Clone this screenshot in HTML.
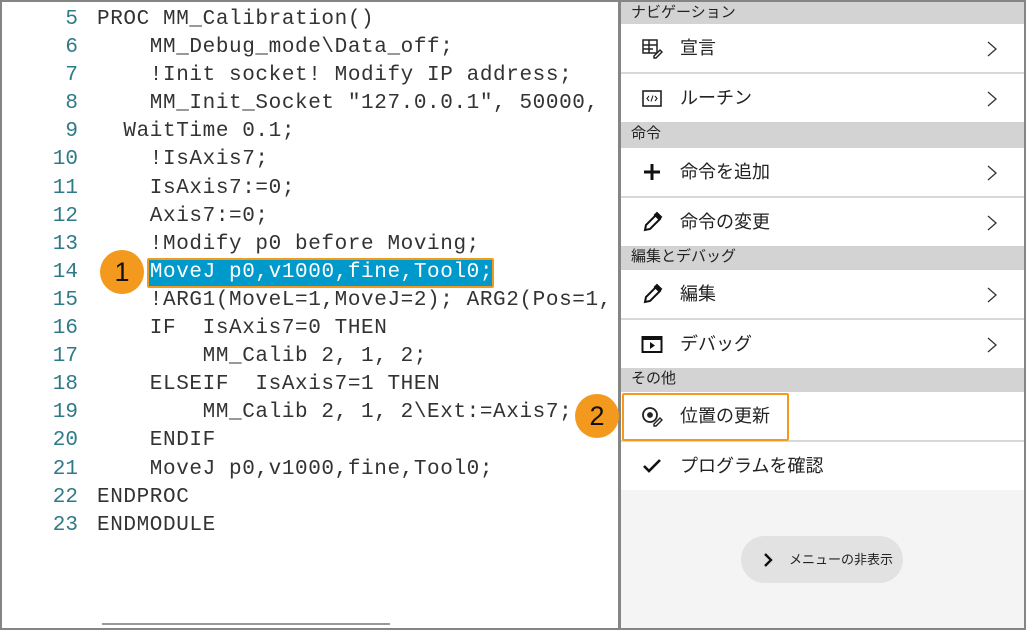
<html><head><style>
body{margin:0;width:1026px;height:630px;overflow:hidden;background:#fff;font-family:"Liberation Sans","Noto Sans CJK JP",sans-serif;position:relative}
.frame{position:absolute;left:0;top:0;width:1022px;height:626px;border:2px solid #858585}
.div{position:absolute;left:618px;top:0;width:3px;height:630px;background:#858585}
.rp{position:absolute;left:621px;top:2px;width:403px;height:626px;background:#f4f4f4}
.h{background:#d3d3d3;height:24px;line-height:22px;font-size:15px;color:#222;padding-left:10px;box-sizing:border-box}
.it{background:#fff;height:48px;position:relative;font-size:18px;color:#222;line-height:48px}
.it .t{position:absolute;left:59px}
.it .ic{position:absolute;left:20px;top:13px;width:22px;height:22px}
.it .ar{position:absolute;right:26px;top:16px}
.sep{height:2px;background:#d8d8d8}
.c{position:absolute;width:44px;height:44px;border-radius:50%;background:#f39a1e;color:#111;font-size:27px;text-align:center;line-height:44px}
.mono{font-family:"Liberation Mono",monospace;font-size:21px;letter-spacing:0.6px;line-height:28.1px;white-space:pre}
</style></head><body>
<div class="frame"></div>
<div style="position:absolute;left:147px;top:258px;width:343px;height:26px;background:#0099cc;border:2px solid #f39a1e;border-radius:2px"></div>
<div class="mono" style="position:absolute;left:0;top:6px;width:78px;text-align:right;color:#2f7a88;letter-spacing:0">5
6
7
8
9
10
11
12
13
14
15
16
17
18
19
20
21
22
23</div>
<div class="mono" style="position:absolute;left:97px;top:6px;width:520px;overflow:hidden;color:#333">PROC MM_Calibration()
    MM_Debug_mode\Data_off;
    !Init socket! Modify IP address;
    MM_Init_Socket "127.0.0.1", 50000,
  WaitTime 0.1;
    !IsAxis7;
    IsAxis7:=0;
    Axis7:=0;
    !Modify p0 before Moving;
    <span style="color:#fff">MoveJ p0,v1000,fine,Tool0;</span>
    !ARG1(MoveL=1,MoveJ=2); ARG2(Pos=1,
    IF  IsAxis7=0 THEN
        MM_Calib 2, 1, 2;
    ELSEIF  IsAxis7=1 THEN
        MM_Calib 2, 1, 2\Ext:=Axis7;
    ENDIF
    MoveJ p0,v1000,fine,Tool0;
ENDPROC
ENDMODULE</div>
<div style="position:absolute;left:102px;top:623px;width:288px;height:2px;background:#999"></div>
<div class="c" style="left:100px;top:250px">1</div>
<div class="div"></div>
<div class="rp">
<div class="h" style="height:22px">ナビゲーション</div>
<div class="it"><svg class="ic" viewBox="0 0 22 22" fill="none" stroke="#222" stroke-width="1.5"><rect x="2" y="3" width="14" height="13"/><path d="M2 8h14M2 12h10M8 3v13"/><path d="M13 19l6-6 2 2-6 6h-2z" fill="#fff"/></svg><span class="t">宣言</span><svg class="ar" width="12" height="18" viewBox="0 0 12 18"><path d="M2 2l8 7-8 7" fill="none" stroke="#333" stroke-width="1.3"/></svg></div>
<div class="sep"></div>
<div class="it"><svg class="ic" viewBox="0 0 22 22" fill="none" stroke="#222" stroke-width="1.6"><rect x="2" y="4" width="18" height="15"/><path d="M8 9l-2 2.5 2 2.5M14 9l2 2.5-2 2.5M12 8.5l-2 6" stroke-width="1.1"/></svg><span class="t">ルーチン</span><svg class="ar" width="12" height="18" viewBox="0 0 12 18"><path d="M2 2l8 7-8 7" fill="none" stroke="#333" stroke-width="1.3"/></svg></div>
<div class="h" style="height:26px;line-height:24px">命令</div>
<div class="it"><svg class="ic" viewBox="0 0 22 22"><path d="M11 3v16M3 11h16" stroke="#111" stroke-width="3"/></svg><span class="t">命令を追加</span><svg class="ar" width="12" height="18" viewBox="0 0 12 18"><path d="M2 2l8 7-8 7" fill="none" stroke="#333" stroke-width="1.3"/></svg></div>
<div class="sep"></div>
<div class="it"><svg class="ic" viewBox="0 0 22 22" fill="none" stroke="#111" stroke-width="2"><path d="M4 19l1-5L15 4l4 4-10 10z"/><path d="M14 4l2-2 4 4-2 2z" fill="#111"/></svg><span class="t">命令の変更</span><svg class="ar" width="12" height="18" viewBox="0 0 12 18"><path d="M2 2l8 7-8 7" fill="none" stroke="#333" stroke-width="1.3"/></svg></div>
<div class="h">編集とデバッグ</div>
<div class="it"><svg class="ic" viewBox="0 0 22 22" fill="none" stroke="#111" stroke-width="2"><path d="M4 19l1-5L15 4l4 4-10 10z"/><path d="M14 4l2-2 4 4-2 2z" fill="#111"/></svg><span class="t">編集</span><svg class="ar" width="12" height="18" viewBox="0 0 12 18"><path d="M2 2l8 7-8 7" fill="none" stroke="#333" stroke-width="1.3"/></svg></div>
<div class="sep"></div>
<div class="it"><svg class="ic" viewBox="0 0 22 22"><rect x="1.5" y="4" width="19" height="15" fill="none" stroke="#111" stroke-width="2"/><path d="M1.5 6h19" stroke="#111" stroke-width="2"/><path d="M9 9v7l5-3.5z" fill="#111"/></svg><span class="t">デバッグ</span><svg class="ar" width="12" height="18" viewBox="0 0 12 18"><path d="M2 2l8 7-8 7" fill="none" stroke="#333" stroke-width="1.3"/></svg></div>
<div class="h">その他</div>
<div class="it"><svg class="ic" viewBox="0 0 22 22" fill="none" stroke="#222" stroke-width="1.8"><circle cx="9" cy="10" r="7"/><circle cx="9" cy="10" r="2" fill="#222"/><path d="M13 19l6-6 2 2-6 6h-2z" fill="#fff" stroke-width="1.4"/></svg><span class="t">位置の更新</span></div>
<div class="sep"></div>
<div class="it"><svg class="ic" viewBox="0 0 22 22"><path d="M3 11l5 5L19 5" fill="none" stroke="#111" stroke-width="2.6"/></svg><span class="t">プログラムを確認</span></div>
</div>
<div style="position:absolute;left:622px;top:393px;width:163px;height:44px;border:2px solid #f39a1e;border-radius:2px"></div>
<div class="c" style="left:575px;top:394px">2</div>
<div style="position:absolute;left:741px;top:536px;width:162px;height:47px;border-radius:24px;background:#e2e2e2;font-size:13px;color:#222;line-height:47px"><svg style="position:absolute;left:22px;top:16px" width="12" height="16" viewBox="0 0 12 16"><path d="M2 2l6 6-6 6" fill="none" stroke="#111" stroke-width="2.4"/></svg><span style="position:absolute;left:48px">メニューの非表示</span></div>
</body></html>
